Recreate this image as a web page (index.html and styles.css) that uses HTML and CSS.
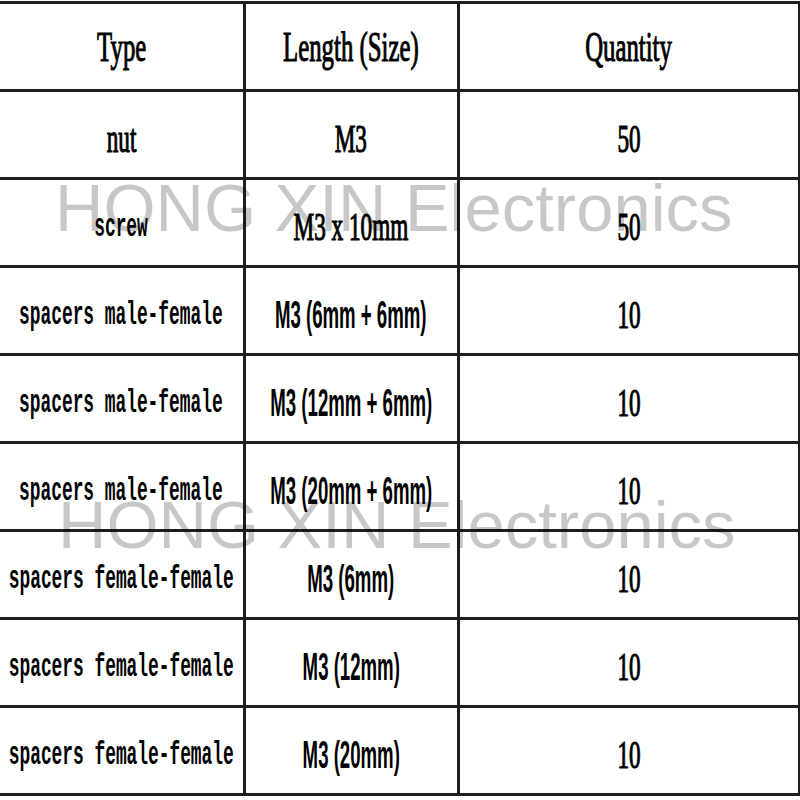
FILE: index.html
```html
<!DOCTYPE html>
<html lang="en">
<head>
<meta charset="utf-8">
<title>Parts list</title>
<link rel="stylesheet" href="styles.css">
</head>
<body>
<div class="sheet">
  <table class="spec">
    <colgroup><col class="c-type"><col class="c-len"><col class="c-qty"></colgroup>
    <thead>
      <tr>
        <th><div class="cell"><span class="txt head">Type</span></div></th>
        <th><div class="cell"><span class="txt head">Length (Size)</span></div></th>
        <th><div class="cell"><span class="txt head">Quantity</span></div></th>
      </tr>
    </thead>
    <tbody>
      <tr>
        <td><div class="cell"><span class="txt serif">nut</span></div></td>
        <td><div class="cell"><span class="txt serif">M3</span></div></td>
        <td><div class="cell"><span class="txt serif">50</span></div></td>
      </tr>
      <tr>
        <td><div class="cell"><span class="txt mono">screw</span></div></td>
        <td><div class="cell"><span class="txt serif">M3 x 10mm</span></div></td>
        <td><div class="cell"><span class="txt serif">50</span></div></td>
      </tr>
      <tr>
        <td><div class="cell"><span class="txt mono">spacers male-female</span></div></td>
        <td><div class="cell"><span class="txt narrow">M3 (6mm + 6mm)</span></div></td>
        <td><div class="cell"><span class="txt serif">10</span></div></td>
      </tr>
      <tr>
        <td><div class="cell"><span class="txt mono">spacers male-female</span></div></td>
        <td><div class="cell"><span class="txt narrow">M3 (12mm + 6mm)</span></div></td>
        <td><div class="cell"><span class="txt serif">10</span></div></td>
      </tr>
      <tr>
        <td><div class="cell"><span class="txt mono">spacers male-female</span></div></td>
        <td><div class="cell"><span class="txt narrow">M3 (20mm + 6mm)</span></div></td>
        <td><div class="cell"><span class="txt serif">10</span></div></td>
      </tr>
      <tr>
        <td><div class="cell"><span class="txt mono">spacers female-female</span></div></td>
        <td><div class="cell"><span class="txt narrow">M3 (6mm)</span></div></td>
        <td><div class="cell"><span class="txt serif">10</span></div></td>
      </tr>
      <tr>
        <td><div class="cell"><span class="txt mono">spacers female-female</span></div></td>
        <td><div class="cell"><span class="txt narrow">M3 (12mm)</span></div></td>
        <td><div class="cell"><span class="txt serif">10</span></div></td>
      </tr>
      <tr>
        <td><div class="cell"><span class="txt mono">spacers female-female</span></div></td>
        <td><div class="cell"><span class="txt narrow">M3 (20mm)</span></div></td>
        <td><div class="cell"><span class="txt serif">10</span></div></td>
      </tr>
    </tbody>
  </table>
  <div class="mark mark-top">HONG XIN Electronics</div>
  <div class="mark mark-bottom">HONG XIN Electronics</div>
</div>
</body>
</html>
```

FILE: styles.css
```css
html, body {
  margin: 0;
  padding: 0;
  background: #ffffff;
}

.sheet {
  position: relative;
  width: 800px;
  height: 800px;
  overflow: hidden;
  padding-top: 1px;
  box-sizing: border-box;
}

.spec {
  border-collapse: collapse;
  table-layout: fixed;
  width: 799px;
  color: #000;
}

.c-type { width: 244px; }
.c-len { width: 214px; }
.c-qty { width: 341px; }

.spec th,
.spec td {
  height: 77px;
  padding: 8px 0 0 0;
  vertical-align: middle;
  border: 3px solid #1e1e1e;
  font-weight: normal;
}

.spec tr > :first-child {
  border-left: none;
}

.cell {
  display: flex;
  justify-content: center;
  align-items: center;
}

.txt {
  flex: none;
  display: inline-block;
  white-space: nowrap;
  line-height: 1;
}

.head {
  font-family: "Liberation Serif", "Times New Roman", serif;
  font-size: 42px;
  -webkit-text-stroke: 1.1px #000;
  transform: scaleX(0.59);
  margin-top: -8px;
}

.serif {
  font-family: "Liberation Serif", "Times New Roman", serif;
  font-size: 40px;
  -webkit-text-stroke: 1.2px #000;
  transform: scaleX(0.58);
}

.mono {
  font-family: "Liberation Mono", "Courier New", monospace;
  font-weight: bold;
  font-size: 34px;
  transform: scaleX(0.525);
}

.narrow {
  font-family: "Liberation Sans", Arial, sans-serif;
  font-weight: bold;
  font-size: 38px;
  transform: scaleX(0.49);
}

.mark {
  position: absolute;
  font-family: "Liberation Sans", Arial, sans-serif;
  font-size: 67px;
  line-height: 1;
  color: rgba(0, 0, 0, 0.22);
  white-space: nowrap;
}

.mark-top {
  left: 55px;
  top: 174px;
}

.mark-bottom {
  left: 58px;
  top: 491px;
}
```
